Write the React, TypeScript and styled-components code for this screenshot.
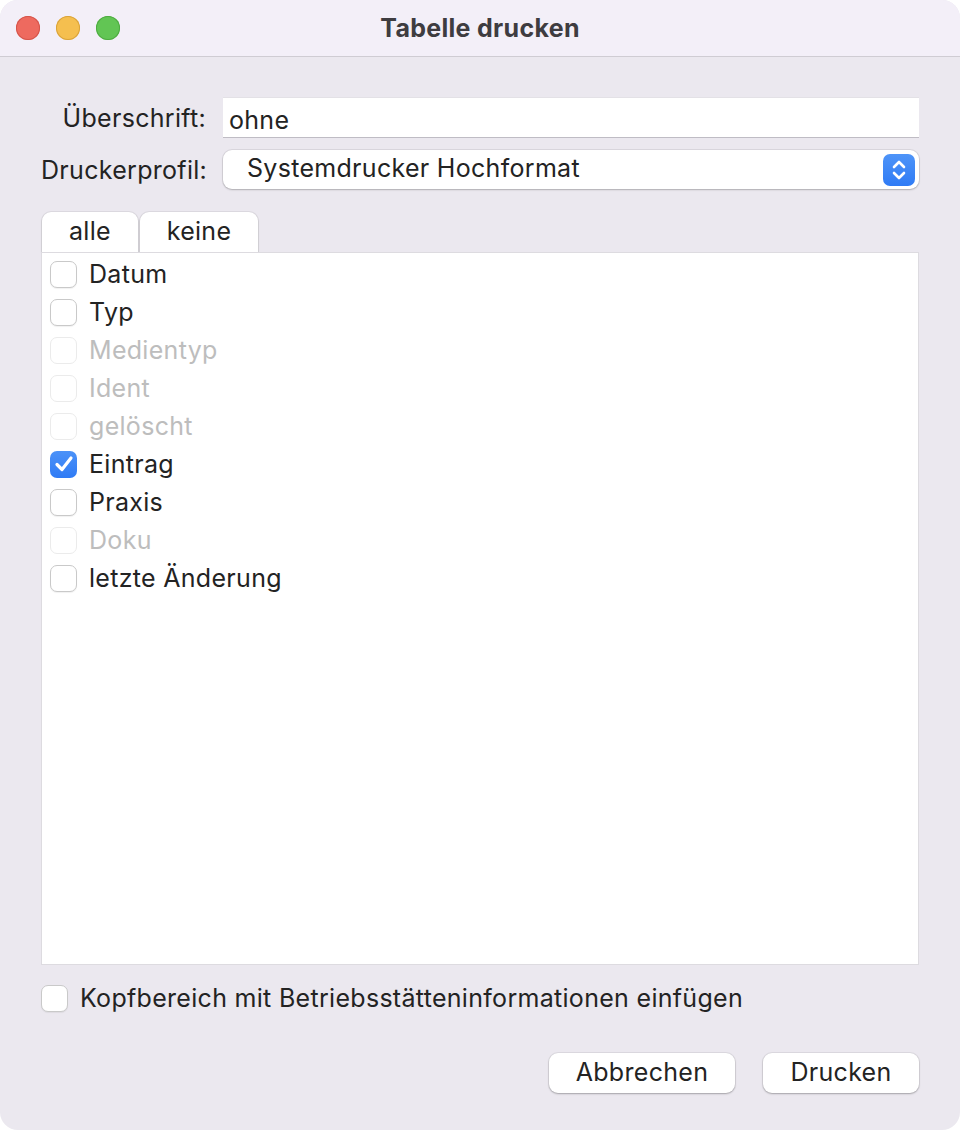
import styled, { createGlobalStyle } from "styled-components";
import { useState } from "react";

const Global = createGlobalStyle`
  html, body {
    margin: 0;
    padding: 0;
    background: #ffffff;
  }
  body {
    font-family: Inter, "Noto Sans", "Liberation Sans", sans-serif;
    color: #232323;
    letter-spacing: 0.3px;
  }
`;

const Window = styled.div`
  width: 960px;
  height: 1130px;
  box-sizing: border-box;
  background: #ebe8ef;
  border-radius: 18px;
  overflow: hidden;
  display: flex;
  flex-direction: column;
`;

const TitleBar = styled.div`
  height: 56px;
  flex: none;
  background: #f3eff8;
  border-bottom: 1px solid #cfccd3;
  display: flex;
  align-items: center;
  position: relative;
  padding-left: 16px;
  gap: 16px;
`;

const Light = styled.span<{ $c: string; $b: string }>`
  width: 24px;
  height: 24px;
  border-radius: 50%;
  background: ${(p) => p.$c};
  box-shadow: inset 0 0 0 1px ${(p) => p.$b};
`;

const Title = styled.div`
  position: absolute;
  left: 0;
  right: 0;
  padding-bottom: 1px;
  text-align: center;
  font-weight: 700;
  font-size: 25px;
  color: #3e3c40;
  pointer-events: none;
`;

const Body = styled.div`
  flex: 1;
  display: flex;
  flex-direction: column;
  padding: 40px 41px 37px 41px;
`;

const FormGrid = styled.div`
  display: grid;
  grid-template-columns: 165px 1fr;
  column-gap: 17px;
  row-gap: 12px;
  align-items: center;
`;

const Label = styled.label`
  text-align: right;
  font-size: 25px;
  color: #232323;
`;

const TextField = styled.input`
  height: 41px;
  box-sizing: border-box;
  border: none;
  border-top: 1px solid #e3e1e6;
  border-bottom: 1px solid #bfbcc4;
  background: #ffffff;
  font: inherit;
  font-size: 25px;
  letter-spacing: 0.3px;
  color: #232323;
  padding: 4px 6px 0;
  outline: none;
`;

const SelectBox = styled.div`
  height: 39px;
  box-sizing: border-box;
  background: #ffffff;
  border-radius: 9px;
  box-shadow: 0 0 0 1px rgba(0, 0, 0, 0.07), 0 1px 2px rgba(0, 0, 0, 0.2);
  display: flex;
  align-items: center;
  justify-content: space-between;
  padding: 0 4px 0 24px;
  font-size: 25px;

  & > span:first-child {
    margin-top: -3px;
  }
`;

const Stepper = styled.span`
  width: 32px;
  height: 32px;
  border-radius: 7px;
  background: linear-gradient(#4e94f8, #2f7bf5);
  display: flex;
  align-items: center;
  justify-content: center;
`;

const ButtonRow = styled.div`
  display: flex;
  gap: 2px;
  margin-top: 23px;
  padding-left: 1px;
`;

const TabButton = styled.button<{ $w: number }>`
  width: ${(p) => p.$w}px;
  height: 40px;
  border: none;
  background: #ffffff;
  border-radius: 9px 9px 0 0;
  box-shadow: 0 0 0 1px rgba(0, 0, 0, 0.06), 0 1px 2px rgba(0, 0, 0, 0.2);
  font: inherit;
  font-size: 25px;
  letter-spacing: 0.3px;
  color: #232323;
  padding: 0 0 2px;
`;

const ListBox = styled.div`
  height: 713px;
  box-sizing: border-box;
  background: #ffffff;
  border: 1px solid #dddbe0;
  padding: 2px 0 0 8px;
  display: flex;
  flex-direction: column;
`;

const Row = styled.label<{ $disabled?: boolean }>`
  height: 38px;
  display: flex;
  align-items: center;
  gap: 12px;
  font-size: 25px;
  color: ${(p) => (p.$disabled ? "#bdbdbd" : "#232323")};
`;

const Box = styled.span<{ $checked?: boolean; $disabled?: boolean }>`
  width: 27px;
  height: 27px;
  box-sizing: border-box;
  border-radius: 7px;
  flex: none;
  display: flex;
  align-items: center;
  justify-content: center;
  background: ${(p) => (p.$checked ? "linear-gradient(#4c92f8, #2f7bf5)" : "#ffffff")};
  border: ${(p) =>
    p.$checked ? "none" : p.$disabled ? "1px solid #ebebeb" : "1px solid #c9c9c9"};
  box-shadow: ${(p) =>
    p.$checked || p.$disabled ? "none" : "0 1px 1px rgba(0,0,0,0.06)"};
`;

const FooterCheck = styled(Row)`
  margin-top: 14px;
`;

const Actions = styled.div`
  margin-top: auto;
  display: flex;
  justify-content: flex-end;
  gap: 28px;
`;

const ActionButton = styled.button<{ $w: number }>`
  width: ${(p) => p.$w}px;
  height: 40px;
  border: none;
  background: #ffffff;
  border-radius: 9px;
  box-shadow: 0 0 0 1px rgba(0, 0, 0, 0.06), 0 1px 2px rgba(0, 0, 0, 0.25);
  font: inherit;
  font-size: 25px;
  letter-spacing: 0.3px;
  color: #232323;
  padding: 0 0 3px;
`;

const Check = () => (
  <svg width="20" height="18" viewBox="0 0 20 18">
    <path
      d="M3 9.5 L8 14.5 L17 3"
      fill="none"
      stroke="#ffffff"
      strokeWidth="3.2"
      strokeLinecap="round"
      strokeLinejoin="round"
    />
  </svg>
);

const Chevrons = () => (
  <svg width="16" height="24" viewBox="0 0 16 24">
    <path
      d="M3 9 L8 4 L13 9 M3 15 L8 20 L13 15"
      fill="none"
      stroke="#ffffff"
      strokeWidth="2.6"
      strokeLinecap="round"
      strokeLinejoin="round"
    />
  </svg>
);

type Column = { name: string; disabled?: boolean; checked?: boolean };

const initialColumns: Column[] = [
  { name: "Datum" },
  { name: "Typ" },
  { name: "Medientyp", disabled: true },
  { name: "Ident", disabled: true },
  { name: "gelöscht", disabled: true },
  { name: "Eintrag", checked: true },
  { name: "Praxis" },
  { name: "Doku", disabled: true },
  { name: "letzte Änderung" },
];

export default function App() {
  const [columns, setColumns] = useState(initialColumns);
  const [header, setHeader] = useState(false);

  const toggle = (i: number) =>
    setColumns((cs) =>
      cs.map((c, j) => (j === i && !c.disabled ? { ...c, checked: !c.checked } : c))
    );

  const setAll = (v: boolean) =>
    setColumns((cs) => cs.map((c) => (c.disabled ? c : { ...c, checked: v })));

  return (
    <>
      <Global />
      <Window>
        <TitleBar>
          <Light $c="#ee6a5f" $b="#d4554b" />
          <Light $c="#f5bf4f" $b="#d9a33b" />
          <Light $c="#62c554" $b="#4eab41" />
          <Title>Tabelle drucken</Title>
        </TitleBar>
        <Body>
          <FormGrid>
            <Label>Überschrift:</Label>
            <TextField defaultValue="ohne" />
            <Label>Druckerprofil:</Label>
            <SelectBox>
              <span>Systemdrucker Hochformat</span>
              <Stepper>
                <Chevrons />
              </Stepper>
            </SelectBox>
          </FormGrid>

          <ButtonRow>
            <TabButton $w={96} onClick={() => setAll(true)}>
              alle
            </TabButton>
            <TabButton $w={118} onClick={() => setAll(false)}>
              keine
            </TabButton>
          </ButtonRow>

          <ListBox>
            {columns.map((c, i) => (
              <Row key={c.name} $disabled={c.disabled} onClick={() => toggle(i)}>
                <Box $checked={c.checked} $disabled={c.disabled}>
                  {c.checked && <Check />}
                </Box>
                {c.name}
              </Row>
            ))}
          </ListBox>

          <FooterCheck onClick={() => setHeader((h) => !h)}>
            <Box $checked={header}>{header && <Check />}</Box>
            Kopfbereich mit Betriebsstätteninformationen einfügen
          </FooterCheck>

          <Actions>
            <ActionButton $w={186}>Abbrechen</ActionButton>
            <ActionButton $w={156}>Drucken</ActionButton>
          </Actions>
        </Body>
      </Window>
    </>
  );
}
